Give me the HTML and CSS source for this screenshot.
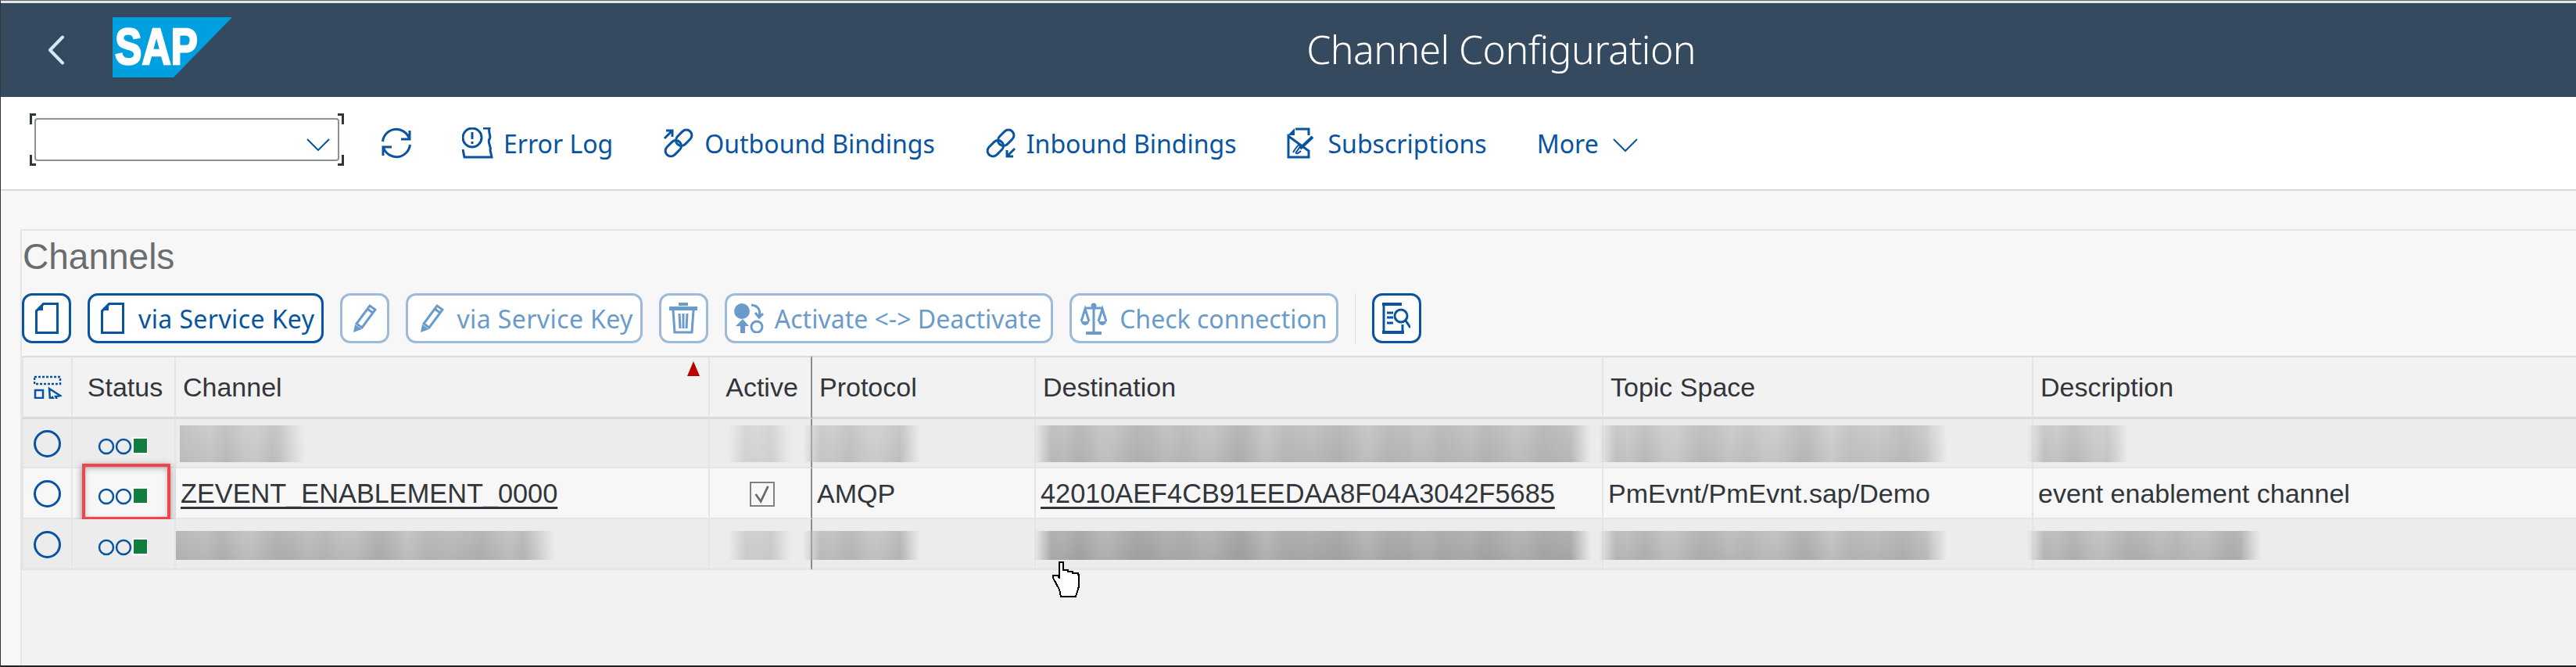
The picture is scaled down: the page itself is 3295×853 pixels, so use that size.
FILE: index.html
```html
<!DOCTYPE html>
<html>
	<head>
		<meta charset="utf-8">
		<title>Channel Configuration</title>
		<link rel="stylesheet" href="styles.css">
	</head>
	<body>
		<div class="window">
			<div class="shell-line"></div>
			<header class="shell">
				<svg class="back" viewBox="0 0 22 38"><path d="M19 2.500 3 19l16 16.500"/></svg>
				<svg class="logo" viewBox="0 0 153 77">
					<polygon class="logo-bg" points="0,0 153,0 78,77 0,77"/>
					<text class="logo-text" x="3" y="60" textLength="106" lengthAdjust="spacingAndGlyphs">SAP</text>
				</svg>
				<h1 class="title">Channel Configuration</h1>
			</header>

			<nav class="toolbar">
				<div class="combo">
					<span class="mark mark-tl"></span><span class="mark mark-tr"></span>
					<span class="mark mark-bl"></span><span class="mark mark-br"></span>
					<div class="combo-input">
						<svg class="combo-arrow" viewBox="0 0 30 16"><path d="M1 1l14 14L29 1"/></svg>
					</div>
				</div>
				<a class="tool tool-first">
					<svg class="ico" width="40" height="40" viewBox="0 0 40 40"><path d="M2.500 18A17.500 17.500 0 0 1 36 13M37 4v11H26M37.500 22A17.500 17.500 0 0 1 4 27M3 36V25h11"/></svg>
				</a>
				<a class="tool">
					<svg class="ico" width="40" height="40" viewBox="0 0 40 40"><circle cx="13" cy="13" r="12"/><path d="M13 6v9M13 18v3M27 1h8c-2 6 3 10 0 14s3 10 1 14l2 9H3L1 28"/></svg>
					Error Log
				</a>
				<a class="tool">
					<svg class="ico" width="40" height="40" viewBox="0 0 40 40"><g transform="rotate(-45 20 20)"><rect x="-1" y="13" width="23" height="14" rx="7"/><rect x="18" y="13" width="23" height="14" rx="7"/></g><path d="M2 14 12 4M4 4h8v8"/></svg>
					Outbound Bindings
				</a>
				<a class="tool">
					<svg class="ico" width="40" height="40" viewBox="0 0 40 40"><g transform="rotate(-45 20 20)"><rect x="-1" y="13" width="23" height="14" rx="7"/><rect x="18" y="13" width="23" height="14" rx="7"/></g><path d="M38 27 28 37M28 29v8h8"/></svg>
					Inbound Bindings
				</a>
				<a class="tool">
					<svg class="ico" width="40" height="40" viewBox="0 0 40 40"><path d="M11 2h17v8M28 30v8H2V11z"/><path class="fill" d="M10 1v9H1z"/><path d="M17 27 33 12" stroke-width="4"/><path d="M8 32c4-7 9-13 9-9s-7 9-5 10 5-2 6-3" stroke-width="2"/></svg>
					Subscriptions
				</a>
				<a class="tool tool-more">
					More
					<svg class="more-arrow" viewBox="0 0 32 18"><path d="M1 1l15 15L31 1"/></svg>
				</a>
			</nav>

			<main class="page">
				<section class="panel">
					<h2 class="panel-title">Channels</h2>
					<div class="actions">
						<button class="btn btn-icon">
							<svg class="ico" width="30" height="40" viewBox="0 0 30 40"><path d="M11 1.500h17.500v37h-27V11z"/><path class="fill" d="M10 0v10H0z"/></svg>
						</button>
						<button class="btn btn-key">
							<svg class="ico" width="30" height="40" viewBox="0 0 30 40"><path d="M11 1.500h17.500v37h-27V11z"/><path class="fill" d="M10 0v10H0z"/></svg>
							via Service Key
						</button>
						<button class="btn btn-icon off">
							<svg class="ico" width="34" height="38" viewBox="0 0 34 38"><path d="M6 26 23 3l7 5-17 23zM20 7l7 5"/><path class="fill" d="M2 37l2-10 9 6z"/></svg>
						</button>
						<button class="btn btn-key off">
							<svg class="ico" width="34" height="38" viewBox="0 0 34 38"><path d="M6 26 23 3l7 5-17 23zM20 7l7 5"/><path class="fill" d="M2 37l2-10 9 6z"/></svg>
							via Service Key
						</button>
						<button class="btn btn-icon off">
							<svg class="ico" width="36" height="40" viewBox="0 0 36 40"><path class="fill" d="M0 5h36v5H0zM12 0h12v4H12z"/><path d="M5 10l2 28h22l2-28M13 14l1 19M18 14v19M23 14l-1 19"/></svg>
						</button>
						<button class="btn btn-act off">
							<svg class="ico" width="38" height="38" viewBox="0 0 38 38"><circle class="fill" cx="10" cy="10" r="10"/><circle cx="29" cy="30" r="7"/><path d="M22 2c10 1 12 8 10 14M27 12l5 6 5-5"/><path class="fill" d="M11 20 2 29h6v9h6V29h5z"/></svg>
							Activate &lt;-&gt; Deactivate
						</button>
						<button class="btn btn-check off">
							<svg class="ico" width="34" height="41" viewBox="0 0 34 41"><circle class="fill" cx="17" cy="4" r="3.500"/><path d="M17 6v32M5 7h24M1 24 6 8l5 16M23 24l5-16 5 16"/><path class="fill" d="M1 24h10a5 5 0 0 1-10 0zM23 24h10a5 5 0 0 1-10 0zM7 37h20v4H7z"/></svg>
							Check connection
						</button>
						<span class="sep"></span>
						<button class="btn btn-icon">
							<svg class="ico" width="36" height="40" viewBox="0 0 36 40"><path d="M24 2H2v36h24v-10M6 13h8M6 19h8M6 26h8"/><circle cx="24" cy="17" r="8"/><path d="M30 23l6 9"/><path class="fill" d="M0 0h25v4H0zM0 36h28v4H0z"/></svg>
						</button>
					</div>

					<div class="grid-wrap">
						<table class="grid">
							<colgroup>
								<col class="c-sel"><col class="c-status"><col class="c-channel"><col class="c-active">
								<col class="c-protocol"><col class="c-dest"><col class="c-topic"><col class="c-desc">
							</colgroup>
							<thead>
								<tr>
									<th class="sel">
										<svg class="ico ico-all" width="36" height="30" viewBox="0 0 36 30"><path class="dots" d="M1 2h33v9H1z"/><path d="M2 19h10v10H2zM20 17l14 9-6 1 3 6-3 1-4-6-3 3z"/></svg>
									</th>
									<th class="center">Status</th>
									<th class="sorted">Channel<span class="sort-mark"></span></th>
									<th class="center line">Active</th>
									<th>Protocol</th>
									<th>Destination</th>
									<th>Topic Space</th>
									<th>Description</th>
								</tr>
							</thead>
							<tbody>
								<tr class="row-a">
									<td class="sel"><span class="radio"></span></td>
									<td class="center"><svg class="lights" viewBox="0 0 66 24"><circle cx="11" cy="13" r="9"/><circle cx="33" cy="13" r="9"/><rect class="lamp-halo" x="44" y="1" width="20" height="22"/><rect class="lamp" x="46" y="3" width="17" height="18"/></svg></td>
									<td><span class="smear s-ch1"></span></td>
									<td class="center line"><span class="smear s-act"></span></td>
									<td><span class="smear s-pro"></span></td>
									<td><span class="smear s-dest"></span></td>
									<td><span class="smear s-top"></span></td>
									<td><span class="smear s-des1"></span></td>
								</tr>
								<tr class="row-b">
									<td class="sel"><span class="radio"></span></td>
									<td class="center status-hit"><svg class="lights" viewBox="0 0 66 24"><circle cx="11" cy="13" r="9"/><circle cx="33" cy="13" r="9"/><rect class="lamp-halo" x="44" y="1" width="20" height="22"/><rect class="lamp" x="46" y="3" width="17" height="18"/></svg><span class="callout"></span></td>
									<td><a class="link">ZEVENT_ENABLEMENT_0000</a></td>
									<td class="center line"><span class="check"><svg viewBox="0 0 28 28"><path d="M5 14l7 10L22 3"/></svg></span></td>
									<td>AMQP</td>
									<td><a class="link">42010AEF4CB91EEDAA8F04A3042F5685</a></td>
									<td>PmEvnt/PmEvnt.sap/Demo</td>
									<td>event enablement channel</td>
								</tr>
								<tr class="row-a row-c">
									<td class="sel"><span class="radio"></span></td>
									<td class="center"><svg class="lights" viewBox="0 0 66 24"><circle cx="11" cy="13" r="9"/><circle cx="33" cy="13" r="9"/><rect class="lamp-halo" x="44" y="1" width="20" height="22"/><rect class="lamp" x="46" y="3" width="17" height="18"/></svg></td>
									<td><span class="smear s-ch3"></span></td>
									<td class="center line"><span class="smear s-act"></span></td>
									<td><span class="smear s-pro"></span></td>
									<td><span class="smear s-dest"></span></td>
									<td><span class="smear s-top"></span></td>
									<td><span class="smear s-des3"></span></td>
								</tr>
							</tbody>
						</table>
					</div>
				</section>
			</main>

			<svg class="hand" viewBox="0 0 36 46"><path d="M9 1h5v10h6v2h6v2h7v2h1v15l-4 13H11l-2-9-8-15v-3h6l2 4z"/></svg>
		</div>
	</body>
</html>
```

FILE: styles.css
```css
*{margin: 0;padding: 0;box-sizing: border-box;}
html,body{width: 3295px;height: 853px;overflow: hidden;}
body{font-family: "Liberation Sans", Arial, sans-serif;color: #32363a;}
svg{display: block;flex: none;}

.window{
	position: relative;
	width: 3295px;
	height: 853px;
	display: flex;
	flex-direction: column;
	border-top: 1px solid #666;
	border-left: 1px solid #333;
	border-bottom: 2px solid #222;
	background: #f7f7f7;
}
.shell-line{height: 3px;background: #dfe7ef;}

/* shell bar */
.shell{
	height: 120px;
	display: flex;
	align-items: center;
	padding-left: 60px;
	background: #354a5f;
}
.back{width: 22px;height: 38px;}
.back path{fill: none;stroke: #d1e8ff;stroke-width: 4;stroke-linecap: round;stroke-linejoin: round;}
.logo{width: 153px;height: 77px;margin-left: 61px;margin-top: -7px;}
.logo-bg{fill: #009fdf;}
.logo-text{
	font-family: "Liberation Sans", Arial, sans-serif;
	font-size: 65px;
	font-weight: 700;
	fill: #fff;
	stroke: #fff;
	stroke-width: 2.500px;
}
.title{
	margin-left: auto;
	margin-right: 1126px;
	margin-top: -2px;
	font-family: "Noto Sans", sans-serif;
	font-size: 50px;
	font-weight: 300;
	letter-spacing: -0.6px;
	color: #fff;
	white-space: nowrap;
}

/* toolbar */
.toolbar{
	height: 120px;
	display: flex;
	align-items: center;
	gap: 64px;
	padding-left: 37px;
	background: #fff;
	border-bottom: 2px solid #d9d9d9;
	font-family: "Noto Sans", sans-serif;
	font-size: 32px;
	color: #0854a0;
}
.combo{position: relative;width: 402px;height: 67px;padding: 6px;margin-bottom: 10px;}
.combo-input{
	height: 55px;
	display: flex;
	align-items: center;
	justify-content: flex-end;
	padding-right: 10px;
	background: #fff;
	border: 2px solid #89919a;
	border-radius: 4px;
}
.combo-arrow{width: 30px;height: 16px;margin-top: 14px;}
.combo-arrow path,.more-arrow path{fill: none;stroke: #0854a0;stroke-width: 2;}
.mark{position: absolute;width: 8px;height: 14px;border: 0 solid #32363a;}
.mark-tl{left: 0;top: 0;border-width: 3px 0 0 3px;}
.mark-tr{right: 0;top: 0;border-width: 3px 3px 0 0;}
.mark-bl{left: 0;bottom: 0;border-width: 0 0 3px 3px;}
.mark-br{right: 0;bottom: 0;border-width: 0 3px 3px 0;}

.tool{display: flex;align-items: center;gap: 13px;white-space: nowrap;}
.tool-first{margin-left: -17px;}
.tool-more{gap: 18px;}
.more-arrow{width: 32px;height: 18px;margin-top: 6px;}

.ico{fill: none;stroke: currentColor;stroke-width: 3;}
.ico .fill{fill: currentColor;stroke: none;}

/* channels panel */
.page{flex: 1;display: flex;padding: 49px 0 0 25px;min-height: 0;}
.panel{
	flex: 1;
	display: flex;
	flex-direction: column;
	border-top: 2px solid #e5e5e5;
	border-left: 2px solid #e5e5e5;
}
.panel-title{
	height: 80px;
	padding: 3px 0 0 1px;
	font-size: 46px;
	line-height: 60px;
	font-weight: 400;
	color: #6a6d70;
}

.actions{display: flex;gap: 21px;height: 64px;margin-bottom: 16px;}
.btn{
	display: flex;
	align-items: center;
	gap: 19px;
	height: 64px;
	padding: 0 10px 0 14px;
	background: #fff;
	border: 3px solid #0854a0;
	border-radius: 13px;
	font-family: "Noto Sans", sans-serif;
	font-size: 32px;
	color: #0854a0;
	white-space: nowrap;
}
.btn-icon{width: 63px;justify-content: center;padding: 0;}
.btn-key{gap: 18px;letter-spacing: 0.4px;padding-right: 9px;}
.btn-key.off{gap: 14px;}
.btn-act{gap: 14px;padding: 0 12px 0 9px;}
.btn-check{gap: 16px;padding: 0 11px;}
.off{color: #6a9bcb;border-color: #9dbad9;}
.sep{width: 1px;background: #dcdcdc;}

/* table */
.grid-wrap{flex: 1;background: #f2f2f2;}
.grid{
	width: 3267px;
	table-layout: fixed;
	border-collapse: separate;
	border-spacing: 0;
	font-size: 34px;
	color: #32363a;
}
.c-sel{width: 65px;}
.c-status{width: 132px;}
.c-channel{width: 683px;}
.c-active{width: 131px;}
.c-protocol{width: 286px;}
.c-dest{width: 726px;}
.c-topic{width: 550px;}
.c-desc{width: 694px;}

th,td{
	position: relative;
	text-align: left;
	white-space: nowrap;
	border-right: 2px solid #e5e5e5;
	border-bottom: 2px solid #e5e5e5;
}
th{
	height: 81px;
	padding-left: 9px;
	font-weight: 400;
	background: #f2f2f2;
	border-top: 2px solid #dcdcdc;
	border-bottom: 3px solid #d9d9d9;
}
td{padding: 2px 0 0 6px;}
th.center,td.center{padding-left: 4px;text-align: center;}
th.sel,td.sel{padding-left: 0;}
th:first-child,td:first-child{border-left: 2px solid #e5e5e5;}
th:last-child,td:last-child{border-right: 0;}
.line{border-right-color: #8c8c8c;}
tr td.line{border-bottom-color: #e5e5e5;}

.row-a td{height: 63px;background: #ececec;}
.row-b td{height: 65px;background: #f7f7f7;}
.row-c td{height: 65px;}

.ico-all{margin: 0 auto;color: #0854a0;stroke-width: 2.500;}
.ico-all .dots{stroke-dasharray: 3 2;}
.sort-mark{
	position: absolute;
	right: 11px;
	top: 5px;
	border-left: 8px solid transparent;
	border-right: 8px solid transparent;
	border-bottom: 19px solid #bb0000;
}
.radio{
	display: block;
	width: 35px;
	height: 35px;
	margin: 0 0 0 13px;
	background: transparent;
	border: 3px solid #0854a0;
	border-radius: 50%;
}
.lights{width: 66px;height: 24px;margin: 5px 0 0 28px;}
.lights circle{fill: none;stroke: #0854a0;stroke-width: 2.500;}
.lamp-halo{fill: #fff;}
.lamp{fill: #107e3e;}
.callout{
	position: absolute;
	left: 12px;
	top: -6px;
	width: 113px;
	height: 72px;
	border: 4px solid #f2434b;
	box-shadow: 0 3px 9px rgba(0,0,0,0.45), inset 0 3px 7px rgba(0,0,0,0.22);
}
.link{text-decoration: underline;text-decoration-thickness: 3px;text-underline-offset: 5px;font-size: 34.3px;}
.check{
	display: block;
	width: 32px;
	height: 32px;
	margin: 0 auto;
	padding: 1px;
	background: #f7f7f7;
	border: 2px solid #7f8285;
}
.check path{fill: none;stroke: #6a6d70;stroke-width: 3;}

/* blanked out values */
.smear{
	position: absolute;
	top: 8px;
	height: 47px;
	background-color: #c6c7c8;
	background-image:
		repeating-linear-gradient(90deg, rgba(80,80,80,0.10) 0, rgba(80,80,80,0) 38px, rgba(80,80,80,0.07) 61px, rgba(80,80,80,0) 97px, rgba(80,80,80,0.10) 130px),
		repeating-linear-gradient(90deg, rgba(255,255,255,0.10) 0, rgba(255,255,255,0) 57px, rgba(255,255,255,0.12) 83px, rgba(255,255,255,0) 149px, rgba(255,255,255,0.10) 211px),
		linear-gradient(180deg, rgba(255,255,255,0.08), rgba(80,80,80,0.06));
	-webkit-mask-image: linear-gradient(90deg, transparent, #000 22px, #000 calc(100% - 26px), transparent);
	mask-image: linear-gradient(90deg, transparent, #000 22px, #000 calc(100% - 26px), transparent);
}
.row-c .smear{top: 15px;height: 37px;background-color: #b8b9ba;}
.s-ch1{left: 5px;width: 160px;-webkit-mask-image: linear-gradient(90deg, #000, #000 calc(100% - 40px), transparent);mask-image: linear-gradient(90deg, #000, #000 calc(100% - 40px), transparent);}
.s-ch3{left: 0;width: 485px;-webkit-mask-image: linear-gradient(90deg, #000, #000 calc(100% - 40px), transparent);mask-image: linear-gradient(90deg, #000, #000 calc(100% - 40px), transparent);}
.s-act{left: 24px;width: 80px;opacity: 0.6;}
.s-pro{left: -12px;width: 150px;opacity: 0.9;}
.s-dest{left: -2px;width: 712px;background-color: #bcbdbe;}
.row-c .s-dest{background-color: #a9aaab;}
.s-top{left: -6px;width: 445px;}
.s-des1{left: -8px;width: 128px;}
.s-des3{left: -8px;width: 300px;}

.hand{position: absolute;left: 1345px;top: 717px;width: 36px;height: 46px;}
.hand path{fill: #fff;stroke: #000;stroke-width: 2;shape-rendering: crispEdges;}
```
